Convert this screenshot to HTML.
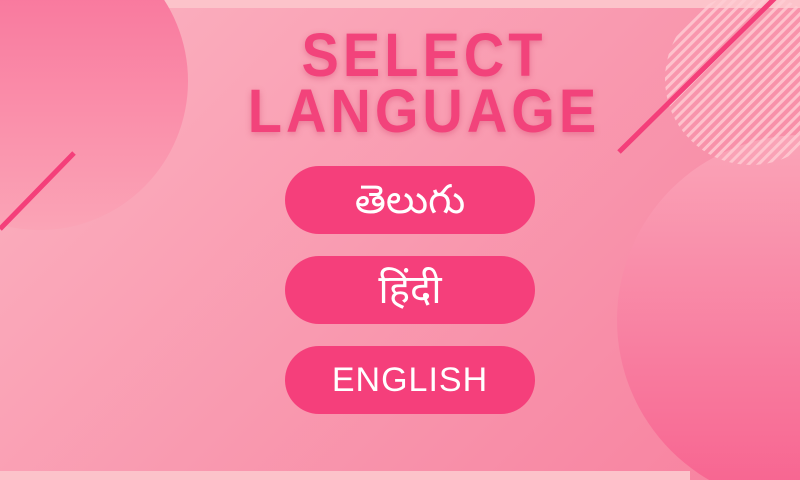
<!DOCTYPE html>
<html><head><meta charset="utf-8"><style>
html,body{margin:0;padding:0;width:800px;height:480px;overflow:hidden}
#w{position:relative;width:800px;height:480px;overflow:hidden;background:linear-gradient(135deg,#fbb3c1 0%,#f99ab0 50%,#f7819f 100%);font-family:"Liberation Sans",sans-serif}
.abs{position:absolute}
.t{position:absolute;left:0;width:800px;height:56px;text-align:center;color:#f2437b;font-weight:bold;font-size:56px;letter-spacing:4px;line-height:56px;transform:scaleY(1.1);text-shadow:0 2px 6px rgba(200,40,90,.35);padding-left:48px;box-sizing:border-box}
.b{position:absolute;left:285px;width:250px;height:68px;border-radius:34px;background:#f53f7b;color:#fff;text-align:center;line-height:68px;font-size:34px;font-family:"Liberation Sans","Noto Sans Telugu","Noto Sans Devanagari","Lohit Telugu","Lohit Devanagari",sans-serif}
</style></head><body><div id="w">
<svg class="abs" style="left:0;top:0" width="800" height="480">
<defs>
<linearGradient id="g1" x1="0" y1="0" x2="0" y2="1"><stop offset="0" stop-color="#f86e98"/><stop offset="1" stop-color="#fba4b6"/></linearGradient>
<linearGradient id="g2" x1="0" y1="0" x2="0" y2="1"><stop offset="0" stop-color="#faa5b8"/><stop offset="1" stop-color="#f7628f"/></linearGradient>
<pattern id="h" width="7" height="7" patternUnits="userSpaceOnUse" patternTransform="rotate(45)"><rect width="3" height="7" fill="rgba(255,205,212,.8)"/></pattern>
</defs>
<rect x="0" y="0" width="800" height="8" fill="#fcc3ca"/>
<rect x="0" y="471" width="690" height="9" fill="#fcc3ca"/>
<ellipse cx="40" cy="81" rx="148" ry="149" fill="url(#g1)"/>
<circle cx="802" cy="320" r="185" fill="url(#g2)"/>
<circle cx="751" cy="79" r="86" fill="url(#h)"/>
<line x1="0" y1="229" x2="74" y2="153" stroke="#f43f7a" stroke-width="5"/>
<line x1="619" y1="152" x2="775" y2="-2" stroke="#f43f7a" stroke-width="5"/>
</svg>
<div class="t" style="top:27px">SELECT</div>
<div class="t" style="top:83px">LANGUAGE</div>
<div class="b" style="top:166px;font-size:40px">తెలుగు</div>
<div class="b" style="top:256px;font-size:40px">हिंदी</div>
<div class="b" style="top:346px;letter-spacing:1px">ENGLISH</div>
</div></body></html>
